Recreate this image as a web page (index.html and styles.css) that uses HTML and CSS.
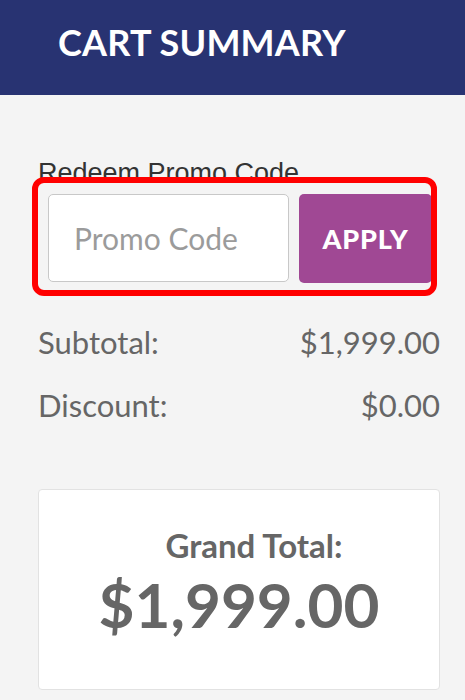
FILE: index.html
```html
<!DOCTYPE html>
<html lang="en">
<head>
<meta charset="utf-8">
<title>Cart Summary</title>
<link rel="stylesheet" href="styles.css">
</head>
<body>
<header class="header">
  <h1 class="title">CART SUMMARY</h1>
</header>
<main class="content">
  <p class="promo-label">Redeem Promo Code</p>
  <div class="promo-wrap">
    <div class="promo-row">
      <input class="promo-input" type="text" placeholder="Promo Code">
      <button class="apply-btn" type="button">APPLY</button>
    </div>
    <div class="highlight"></div>
  </div>
  <div class="line">
    <span>Subtotal:</span>
    <span>$1,999.00</span>
  </div>
  <div class="line line-second">
    <span>Discount:</span>
    <span>$0.00</span>
  </div>
  <section class="total-card">
    <div class="total-label">Grand Total:</div>
    <div class="total-amount">$1,999.00</div>
  </section>
</main>
</body>
</html>
```
FILE: styles.css
```css
* { box-sizing: border-box; }

html, body {
  margin: 0;
  padding: 0;
  background: #f4f4f4;
  font-family: Lato, "Open Sans", sans-serif;
  color: #666;
}

.header {
  height: 95px;
  background: #283372;
  padding: 20px 0 0 58px;
}

.title {
  margin: 0;
  font-size: 36px;
  line-height: 44px;
  font-weight: 700;
  color: #fff;
  letter-spacing: 0.2px;
}

.content {
  padding: 0 25px 0 38px;
}

.promo-label {
  margin: 63px 0 5px;
  font-family: "Liberation Sans", Arial, sans-serif;
  font-size: 27px;
  line-height: 31px;
  color: #333;
}

.promo-wrap {
  position: relative;
}

.promo-row {
  display: flex;
  gap: 10px;
  padding-left: 10px;
  height: 89px;
}

.promo-input {
  width: 241px;
  height: 88px;
  border: 1.5px solid #c8c8c8;
  border-radius: 5px;
  background: #fff;
  padding: 0 0 0 25px;
  font-family: Lato, sans-serif;
  font-size: 30px;
  color: #666;
  outline: none;
}

.promo-input::placeholder {
  color: #9b9b9b;
}

.apply-btn {
  width: 133px;
  height: 89px;
  border: none;
  border-radius: 5px;
  background: #a04894;
  color: #fff;
  font-family: Lato, sans-serif;
  font-weight: 900;
  font-size: 27px;
  letter-spacing: 0.8px;
  padding: 0;
}

.highlight {
  position: absolute;
  left: -6px;
  top: -17px;
  width: 405px;
  height: 119px;
  border: 6px solid #ff0000;
  border-radius: 12px;
  pointer-events: none;
}

.line {
  display: flex;
  justify-content: space-between;
  margin-top: 41px;
  font-size: 31px;
  line-height: 37px;
  color: #666;
}

.line-second {
  margin-top: 26px;
}

.total-card {
  margin-top: 65px;
  height: 201px;
  background: #fff;
  border: 1.5px solid #e2e2e2;
  border-radius: 4px;
  padding-top: 36px;
  text-align: center;
  color: #666;
}

.total-label {
  font-size: 33px;
  line-height: 38px;
  font-weight: 700;
  padding-left: 30px;
}

.total-amount {
  margin-top: 3px;
  font-size: 62px;
  line-height: 74px;
  font-weight: 700;
}
```
